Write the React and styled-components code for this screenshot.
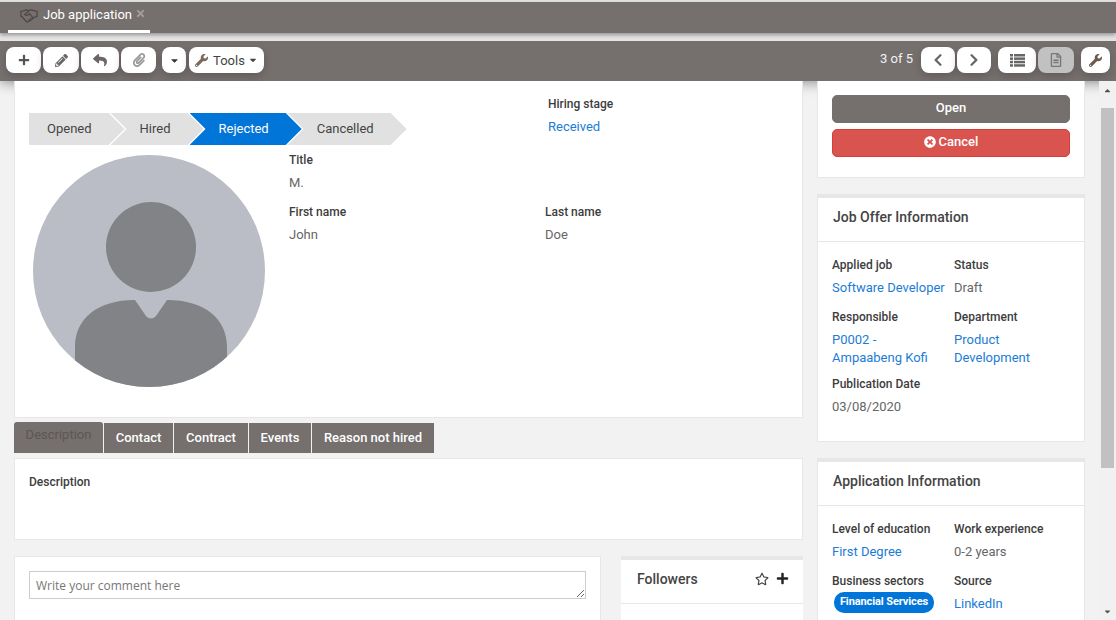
import React from 'react';
import styled, { createGlobalStyle } from 'styled-components';
import {
  FaTimes, FaPlus, FaPencilAlt, FaReply, FaPaperclip, FaWrench,
  FaChevronLeft, FaChevronRight, FaRegFileAlt, FaTimesCircle, FaRegStar,
  FaCaretDown, FaCaretUp,
} from 'react-icons/fa';
import { LiaHandshake } from 'react-icons/lia';

const GlobalStyle = createGlobalStyle`
  html, body {
    margin: 0;
    height: 100%;
    overflow: hidden;
    background: #f2f2f2;
    font-family: Roboto, "Liberation Sans", sans-serif;
    color: #333;
  }
  * { box-sizing: border-box; }
`;

const Page = styled.div`
  width: 1116px;
  height: 620px;
  overflow: hidden;
  display: flex;
  flex-direction: column;
`;

const Header = styled.header`
  flex: none;
  padding-top: 2px;
  background: #e4e4e4;
  box-shadow: 0 2px 12px rgba(0, 0, 0, 0.4);
  position: relative;
  z-index: 1;
`;

const TabBar = styled.div`
  height: 31px;
  padding-left: 8px;
  background: #756f6e;
  box-shadow: 0 2px 4px rgba(0, 0, 0, 0.35);
  position: relative;
`;

const AppTab = styled.div`
  width: 142px;
  height: 31px;
  padding: 3px 0 0 11px;
  display: flex;
  gap: 4px;
  border-bottom: 3px solid #fff;
  color: #fff;
  font-size: 13px;
  line-height: 19px;
  svg { color: #4d4847; }
`;

const TabClose = styled.span`
  margin: 3px 0 0 -1px;
  font-size: 11px;
  line-height: 11px;
  svg { color: #a09c9b; }
`;

const Toolbar = styled.div`
  height: 40px;
  margin-top: 8px;
  padding: 6px 6px 0 6px;
  display: flex;
  align-items: flex-start;
  background: #756f6e;
`;

const ToolButton = styled.button`
  width: ${p => p.$w}px;
  height: 26px;
  margin-left: ${p => p.$ml || 0}px;
  padding: 0;
  display: flex;
  align-items: center;
  justify-content: center;
  gap: 3px;
  border: 0;
  border-radius: 8px;
  background: ${p => (p.$off ? '#c2c1c1' : '#fff')};
  color: ${p => p.$color || '#6b6665'};
  font: 13px Roboto, sans-serif;
  box-shadow: 0 3px 8px rgba(0, 0, 0, 0.18);
`;

const Counter = styled.span`
  margin-left: auto;
  margin-right: 8px;
  color: #f2f2f2;
  font-size: 13px;
  line-height: 24px;
`;

const Main = styled.div`
  flex: 1;
  min-height: 0;
  display: flex;
`;

const Content = styled.div`
  width: 1099px;
  padding: 0 14px;
  display: flex;
  gap: 14px;
  align-items: flex-start;
`;

const LeftColumn = styled.div`
  width: 789px;
  flex: none;
`;

const RightColumn = styled.div`
  width: 268px;
  flex: none;
`;

const Card = styled.section`
  position: relative;
  z-index: 2;
  background: #fff;
  border: 1px solid #e7e7e7;
  border-top-width: ${p => (p.$thick ? 4 : 1)}px;
`;

const ProfileCard = styled(Card)`
  height: 337px;
  border-top: 0;
`;

const StageRow = styled.div`
  height: 74px;
  display: flex;
`;

const Steps = styled.div`
  width: 533px;
  padding: 32px 0 0 14px;
  display: flex;
`;

const Step = styled.div`
  height: 32px;
  margin-left: ${p => (p.$first ? 0 : -14)}px;
  padding: 0 33px 0 ${p => (p.$first ? 18 : 29)}px;
  background: ${p => (p.$active ? '#0275d8' : '#e1e1e1')};
  color: ${p => (p.$active ? '#fff' : '#444')};
  font-size: 13px;
  line-height: 31px;
  white-space: nowrap;
  clip-path: ${p => (p.$first
    ? 'polygon(0 0, calc(100% - 16px) 0, 100% 50%, calc(100% - 16px) 100%, 0 100%)'
    : 'polygon(0 0, calc(100% - 16px) 0, 100% 50%, calc(100% - 16px) 100%, 0 100%, 16px 50%)')};
`;

const HiringStage = styled.div`
  padding-top: 15px;
`;

const ProfileRow = styled.div`
  display: flex;
`;

const Avatar = styled.svg`
  width: 232px;
  height: 232px;
  margin-left: 18px;
  flex: none;
`;

const NameFields = styled.div`
  width: 512px;
  margin-left: 24px;
  display: grid;
  grid-template-columns: 256px 256px;
  align-content: start;
  margin-top: -3px;
`;

const TitleField = styled.div`
  grid-column: 1 / 3;
`;

const Field = styled.div`
  margin-bottom: 12px;
`;

const Label = styled.div`
  font-size: 12px;
  font-weight: 500;
  line-height: 16px;
  color: #3d3d3d;
  white-space: nowrap;
`;

const Value = styled.div`
  margin-top: 6px;
  margin-bottom: ${p => (p.$lines ? -3 : 0)}px;
  font-size: 13px;
  line-height: 18px;
  color: ${p => (p.$link ? '#1c7cd6' : '#666')};
`;

const Tabs = styled.div`
  height: 31px;
  margin-top: 4px;
  display: flex;
  align-items: flex-end;
  gap: 1px;
`;

const Tab = styled.div`
  height: ${p => (p.$active ? 31 : 30)}px;
  width: ${p => p.$w}px;
  padding-top: ${p => (p.$active ? 4 : 6)}px;
  background: #756f6e;
  border-radius: ${p => (p.$active ? '3px 3px 0 0' : 0)};
  color: ${p => (p.$active ? '#5c5655' : '#fff')};
  font-size: 13px;
  font-weight: ${p => (p.$active ? 400 : 500)};
  line-height: 18px;
  text-align: center;
`;

const DescriptionCard = styled(Card)`
  height: 82px;
  margin-top: 5px;
  padding: 15px 14px;
`;

const BottomRow = styled.div`
  margin-top: 16px;
  display: flex;
  gap: 20px;
`;

const CommentCard = styled(Card)`
  width: 587px;
  height: 120px;
  padding: 14px;
`;

const CommentBox = styled.textarea`
  display: block;
  width: 100%;
  height: 28px;
  padding: 5px 6px;
  border: 1px solid #ccc;
  outline: 0;
  font: 12px "Open Sans", sans-serif;
  &::placeholder { color: #777; }
`;

const FollowersCard = styled(Card)`
  width: 182px;
  height: 120px;
  border-left: 0;
  border-right: 0;
`;

const FollowersHead = styled.div`
  height: 44px;
  padding: 0 14px 6px 16px;
  display: flex;
  align-items: center;
  gap: 7px;
  border-bottom: 1px solid #e7e7e7;
  font-size: 14px;
  font-weight: 500;
  color: #444;
`;

const Grow = styled.span`
  flex: 1;
`;

const ActionsCard = styled(Card)`
  height: 97px;
  padding: 14px;
  border-top: 0;
`;

const ActionButton = styled.button`
  display: flex;
  align-items: center;
  justify-content: center;
  gap: 3px;
  width: 238px;
  height: 28px;
  margin-bottom: 6px;
  padding: 0 0 3px;
  border: 1px solid ${p => (p.$danger ? '#d43f3a' : '#756f6e')};
  border-radius: 5px;
  background: ${p => (p.$danger ? '#d9534f' : '#756f6e')};
  color: #fff;
  font: 500 13px Roboto, sans-serif;
`;

const InfoCard = styled(Card)`
  margin-top: 16px;
  height: ${p => p.$h}px;
  overflow: hidden;
`;

const InfoTitle = styled.h3`
  height: 44px;
  margin: 0;
  padding-left: 15px;
  border-bottom: 1px solid #e7e7e7;
  font-size: 14px;
  font-weight: 500;
  line-height: 38px;
  color: #444;
`;

const InfoGrid = styled.div`
  padding: 15px 14px 0;
  display: grid;
  grid-template-columns: 122px 1fr;
`;

const Chip = styled.span`
  display: inline-block;
  margin: 3px 0 0 2px;
  width: 100px;
  height: 21px;
  border-radius: 10px;
  background: #0275d8;
  color: #fff;
  font-size: 11px;
  font-weight: 700;
  letter-spacing: -0.1px;
  line-height: 20px;
  text-align: center;
  white-space: nowrap;
`;

const ToolsLabel = styled.span`
  margin-left: 2px;
`;

const Scrollbar = styled.div`
  width: 17px;
  flex: none;
  background: #f1f1f1;
  position: relative;
  z-index: 2;
  display: flex;
  flex-direction: column;
  align-items: center;
  color: #505050;
`;

const ScrollArrow = styled.div`
  height: 17px;
  flex: none;
  font-size: 9px;
  display: flex;
  align-items: center;
  margin-top: ${p => (p.$down ? 'auto' : '1px')};
`;

const ScrollThumb = styled.div`
  width: 13px;
  height: 360px;
  margin-top: 9px;
  background: #c1c1c1;
`;

function InfoField({ label, value, link, lines, children }) {
  return (
    <Field>
      <Label>{label}</Label>
      {children || <Value $link={link} $lines={lines}>{value}</Value>}
    </Field>
  );
}

function ListIcon() {
  return (
    <svg width="15" height="13" viewBox="0 0 15 13" fill="currentColor">
      <rect x="0" y="0" width="3" height="2.5" />
      <rect x="4" y="0" width="11" height="2.5" />
      <rect x="0" y="3.4" width="3" height="2.5" />
      <rect x="4" y="3.4" width="11" height="2.5" />
      <rect x="0" y="6.8" width="3" height="2.5" />
      <rect x="4" y="6.8" width="11" height="2.5" />
      <rect x="0" y="10.2" width="3" height="2.5" />
      <rect x="4" y="10.2" width="11" height="2.5" />
    </svg>
  );
}

function Portrait() {
  return (
    <Avatar viewBox="0 0 232 232">
      <defs>
        <clipPath id="avatarClip"><circle cx="116" cy="116" r="116" /></clipPath>
      </defs>
      <circle cx="116" cy="116" r="116" fill="#babdc5" />
      <g clipPath="url(#avatarClip)" fill="#828387">
        <circle cx="118" cy="92" r="45" />
        <path d="M102 145 L113 161 Q118 166 123 161 L134 145 C172 145 194 164 194 192 L194 240 L42 240 L42 192 C42 164 64 145 102 145 Z" />
      </g>
    </Avatar>
  );
}

export default function App() {
  return (
    <Page>
      <GlobalStyle />
      <Header>
        <TabBar>
          <AppTab>
            <LiaHandshake size={20} />
            Job application
            <TabClose><FaTimes /></TabClose>
          </AppTab>
        </TabBar>
        <Toolbar>
          <ToolButton $w={35} $color="#555"><FaPlus size={12} /></ToolButton>
          <ToolButton $w={36} $ml={2}><FaPencilAlt size={13} /></ToolButton>
          <ToolButton $w={38} $ml={2}><FaReply size={14} /></ToolButton>
          <ToolButton $w={35} $ml={2} $color="#999"><FaPaperclip size={14} /></ToolButton>
          <ToolButton $w={24} $ml={6} $color="#333"><FaCaretDown size={11} /></ToolButton>
          <ToolButton $w={75} $ml={3} $color="#444"><FaWrench size={13} color="#7b6a5c" /><ToolsLabel>Tools</ToolsLabel><FaCaretDown size={10} /></ToolButton>
          <Counter>3 of 5</Counter>
          <ToolButton $w={34} $color="#666"><FaChevronLeft size={14} /></ToolButton>
          <ToolButton $w={34} $ml={2} $color="#666"><FaChevronRight size={14} /></ToolButton>
          <ToolButton $w={38} $ml={7} $color="#666"><ListIcon /></ToolButton>
          <ToolButton $w={36} $ml={2} $off $color="#777"><FaRegFileAlt size={14} /></ToolButton>
          <ToolButton $w={29} $ml={7} $color="#6b5b4f"><FaWrench size={13} /></ToolButton>
        </Toolbar>
      </Header>
      <Main>
        <Content>
          <LeftColumn>
            <ProfileCard>
              <StageRow>
                <Steps>
                  <Step $first>Opened</Step>
                  <Step>Hired</Step>
                  <Step $active>Rejected</Step>
                  <Step>Cancelled</Step>
                </Steps>
                <HiringStage>
                  <InfoField label="Hiring stage" value="Received" link />
                </HiringStage>
              </StageRow>
              <ProfileRow>
                <Portrait />
                <NameFields>
                  <TitleField><InfoField label="Title" value="M." /></TitleField>
                  <InfoField label="First name" value="John" />
                  <InfoField label="Last name" value="Doe" />
                </NameFields>
              </ProfileRow>
            </ProfileCard>
            <Tabs>
              <Tab $active $w={89}>Description</Tab>
              <Tab $w={69}>Contact</Tab>
              <Tab $w={74}>Contract</Tab>
              <Tab $w={62}>Events</Tab>
              <Tab $w={122}>Reason not hired</Tab>
            </Tabs>
            <DescriptionCard><Label>Description</Label></DescriptionCard>
            <BottomRow>
              <CommentCard>
                <CommentBox placeholder="Write your comment here" />
              </CommentCard>
              <FollowersCard $thick>
                <FollowersHead>
                  Followers
                  <Grow />
                  <FaRegStar size={14} color="#444" />
                  <FaPlus size={13} color="#222" />
                </FollowersHead>
              </FollowersCard>
            </BottomRow>
          </LeftColumn>
          <RightColumn>
            <ActionsCard>
              <ActionButton>Open</ActionButton>
              <ActionButton $danger><FaTimesCircle size={12} />Cancel</ActionButton>
            </ActionsCard>
            <InfoCard $thick $h={248}>
              <InfoTitle>Job Offer Information</InfoTitle>
              <InfoGrid>
                <InfoField label="Applied job" value="Software Developer" link />
                <InfoField label="Status" value="Draft" />
                <InfoField label="Responsible" value={<>P0002 -<br />Ampaabeng Kofi</>} link lines />
                <InfoField label="Department" value={<>Product<br />Development</>} link lines />
                <InfoField label="Publication Date" value="03/08/2020" />
              </InfoGrid>
            </InfoCard>
            <InfoCard $thick $h={180}>
              <InfoTitle>Application Information</InfoTitle>
              <InfoGrid>
                <InfoField label="Level of education" value="First Degree" link />
                <InfoField label="Work experience" value="0-2 years" />
                <InfoField label="Business sectors"><Chip>Financial Services</Chip></InfoField>
                <InfoField label="Source" value="LinkedIn" link />
              </InfoGrid>
            </InfoCard>
          </RightColumn>
        </Content>
        <Scrollbar>
          <ScrollArrow><FaCaretUp /></ScrollArrow>
          <ScrollThumb />
          <ScrollArrow $down><FaCaretDown /></ScrollArrow>
        </Scrollbar>
      </Main>
    </Page>
  );
}
